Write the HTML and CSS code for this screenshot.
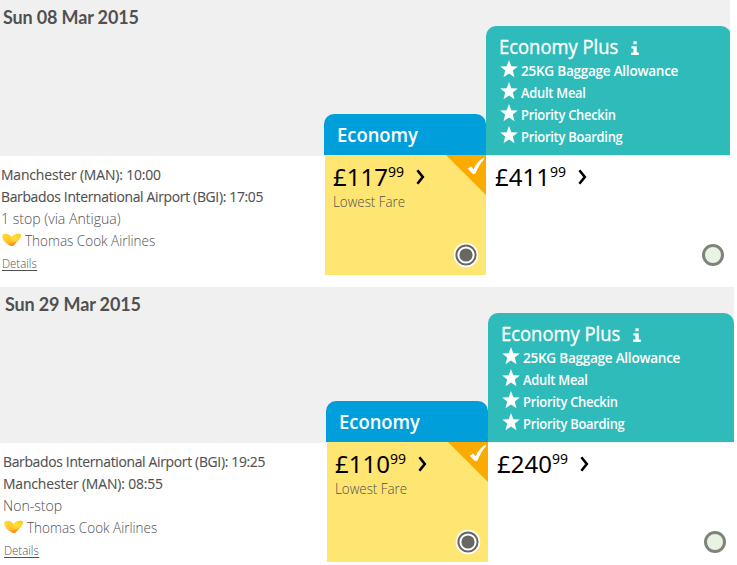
FILE: index.html
```html
<!DOCTYPE html>
<html lang="en">
<head>
<meta charset="utf-8">
<title>Flight selection</title>
<link rel="stylesheet" href="styles.css">
</head>
<body>
<svg class="symbols" aria-hidden="true">
  <defs>
    <linearGradient id="gold" x1="0" y1="0" x2=".75" y2="1"><stop offset="0" stop-color="#ffdc30"/><stop offset=".5" stop-color="#ffc928"/><stop offset="1" stop-color="#ff7508"/></linearGradient>
    <linearGradient id="wing" x1="1" y1="0" x2="0" y2="1"><stop offset="0" stop-color="#ffc814"/><stop offset=".5" stop-color="#ffdf3c"/><stop offset="1" stop-color="#ffb020"/></linearGradient>
    <symbol id="star" viewBox="0 0 18 18"><path d="M9 0l2.300 6.200 6.500.3-5 4.100 1.700 6.600L9 13.500l-5.500 3.700 1.700-6.600-5-4.100 6.500-.3z" fill="#fff"/></symbol>
    <symbol id="info" viewBox="0 0 8 14"><path d="M2.400.3h3.300v3H2.400zM.4 5.200h5.300v6.400h2.100V14H.1v-2.400h2.300V7.400h-2z" fill="#fff"/></symbol>
    <symbol id="arrow" viewBox="0 0 9 16"><path d="M1.400 1.200L6.800 8l-5.400 6.800" fill="none" stroke="#000" stroke-width="2.600"/></symbol>
    <symbol id="heart" viewBox="0 0 19 14"><path d="M.2 3.500C.2 1.300 2 .6 4 .8c2.400.1 4.400 1.400 5.500 3.400C11.500 1.800 14.500.4 17.300.8c1.700.4 1.800 2.200.9 3.700-1.500 2.700-3.700 4.800-5.600 6.900-1 1.200-2 1.900-3.400 1.600C5.300 11.800.8 7.800.2 3.500z" fill="url(#gold)"/><path d="M5.500 8.200C8 7.500 9 4.800 10.300 3.300 12.200 1.500 14.800.4 17.300.8c1.700.4 1.800 2.200.9 3.700C16.500 7.500 13 9.500 10 9.800c-2 .1-3.500-.6-4.500-1.600z" fill="url(#wing)"/></symbol>
    <symbol id="corner" viewBox="0 0 40 40"><path d="M0 0h40v40z" fill="#fbab00"/><path d="M21.600 13.700l3.500-2.200 2.500 2.700C30 9 33 5.200 37.800 2.500l.2 1.700c-3.900 4.300-6.200 8.700-8.500 14.300l-2.300.7z" fill="#fff"/></symbol>
    <symbol id="selected" viewBox="0 0 26 26"><circle cx="13" cy="13" r="12.300" fill="#fff"/><circle cx="13" cy="13" r="9.600" fill="none" stroke="#676863" stroke-width="2"/><circle cx="13" cy="13" r="6.600" fill="#676863"/></symbol>
    <symbol id="empty" viewBox="0 0 22 22"><circle cx="11" cy="11" r="9.500" fill="#e8f4e1" stroke="#7e837b" stroke-width="3"/></symbol>
  </defs>
</svg>
<section class="flight outbound">
  <header class="fare-header">
    <h2>Sun 08 Mar 2015</h2>
    <div class="tab economy"><h3>Economy</h3></div>
    <div class="tab plus">
      <div class="plus-title"><h3>Economy Plus</h3><svg class="info"><use href="#info"/></svg></div>
      <ul>
        <li><svg><use href="#star"/></svg><span class="baggage">25KG Baggage Allowance</span></li>
        <li><svg><use href="#star"/></svg><span>Adult Meal</span></li>
        <li><svg><use href="#star"/></svg><span>Priority Checkin</span></li>
        <li><svg><use href="#star"/></svg><span>Priority Boarding</span></li>
      </ul>
    </div>
  </header>
  <div class="fare-row">
    <div class="details">
      <p class="place short">Manchester (MAN): 10:00</p>
      <p class="place">Barbados International Airport (BGI): 17:05</p>
      <p class="stops">1 stop (via Antigua)</p>
      <p class="airline"><svg><use href="#heart"/></svg><span>Thomas Cook Airlines</span></p>
      <a>Details</a>
    </div>
    <div class="fare chosen">
      <p class="price"><span>£117</span><sup>99</sup><svg><use href="#arrow"/></svg></p>
      <p class="lowest">Lowest Fare</p>
      <svg class="corner"><use href="#corner"/></svg>
      <svg class="radio"><use href="#selected"/></svg>
    </div>
    <div class="fare open">
      <p class="price"><span>£411</span><sup>99</sup><svg><use href="#arrow"/></svg></p>
      <svg class="radio"><use href="#empty"/></svg>
    </div>
  </div>
</section>
<section class="flight inbound">
  <header class="fare-header">
    <h2>Sun 29 Mar 2015</h2>
    <div class="tab economy"><h3>Economy</h3></div>
    <div class="tab plus">
      <div class="plus-title"><h3>Economy Plus</h3><svg class="info"><use href="#info"/></svg></div>
      <ul>
        <li><svg><use href="#star"/></svg><span class="baggage">25KG Baggage Allowance</span></li>
        <li><svg><use href="#star"/></svg><span>Adult Meal</span></li>
        <li><svg><use href="#star"/></svg><span>Priority Checkin</span></li>
        <li><svg><use href="#star"/></svg><span>Priority Boarding</span></li>
      </ul>
    </div>
  </header>
  <div class="fare-row">
    <div class="details">
      <p class="place">Barbados International Airport (BGI): 19:25</p>
      <p class="place short">Manchester (MAN): 08:55</p>
      <p class="stops">Non-stop</p>
      <p class="airline"><svg><use href="#heart"/></svg><span>Thomas Cook Airlines</span></p>
      <a>Details</a>
    </div>
    <div class="fare chosen">
      <p class="price"><span>£110</span><sup>99</sup><svg><use href="#arrow"/></svg></p>
      <p class="lowest">Lowest Fare</p>
      <svg class="corner"><use href="#corner"/></svg>
      <svg class="radio"><use href="#selected"/></svg>
    </div>
    <div class="fare open">
      <p class="price"><span>£240</span><sup>99</sup><svg><use href="#arrow"/></svg></p>
      <svg class="radio"><use href="#empty"/></svg>
    </div>
  </div>
</section>
</body>
</html>
```
FILE: styles.css
```css
* { box-sizing: border-box; margin: 0; padding: 0; }
body { background: #fff; color: #505050; font-family: "Open Sans", "Noto Sans", sans-serif; font-size: 15px; overflow: hidden; }
.symbols { position: absolute; width: 0; height: 0; }
.flight { height: 275px; overflow: hidden; }
.outbound { width: 730px; margin-bottom: 12px; }
.inbound { width: 734px; }
.inbound .fare-header, .inbound .fare-row { padding-left: 2px; }

.fare-header { display: grid; grid-template-columns: 324px 162px 246px; height: 156px; padding-bottom: 1px; align-items: end; background: #f0f0f0; }
.fare-header h2 { align-self: start; padding: 5px 0 0 3px; font: 700 18px/24px Lato, sans-serif; letter-spacing: -.15px; white-space: nowrap; }
.tab { border-radius: 10px 10px 0 0; color: #fff; }
.tab h3 { font-size: 20px; transform: scaleX(.92); transform-origin: 0 50%; }
.economy { height: 41px; padding-left: 13px; background: #009fdc; }
.economy h3 { font-weight: 600; line-height: 42px; }
.plus { width: 246px; height: 129px; padding: 7px 0 0 13px; background: #2fbbb9; }
.outbound .plus { width: 245px; }
.plus-title { display: flex; align-items: center; height: 27px; }
.plus-title h3 { width: 132px; font-weight: 400; line-height: 26px; white-space: nowrap; -webkit-text-stroke: .35px #fff; }
.info { width: 8px; height: 14px; margin-top: 2px; }
.plus ul { list-style: none; }
.plus li { display: flex; height: 22px; font-size: 15px; font-weight: 600; line-height: 21px; white-space: nowrap; letter-spacing: -.3px; }
.plus li svg { width: 18px; height: 18px; margin: 0 3px 0 1px; }
.plus li span { transform: scaleX(.86); transform-origin: 0 50%; }
.plus li .baggage { transform: scaleX(.905); }

.fare-row { display: grid; grid-template-columns: 324px 162px 246px; height: 119px; }
.details { padding: 7px 0 0 1px; line-height: 22px; white-space: nowrap; }
.details p { height: 22px; }
.place { -webkit-text-stroke: .12px #505050; letter-spacing: -.35px; transform: scaleX(.927); transform-origin: 0 50%; }
.short { letter-spacing: -.15px; }
.stops { font-weight: 300; transform: scaleX(.94); transform-origin: 0 50%; }
.airline { display: flex; font-weight: 300; }
.airline span { transform: scaleX(.9); transform-origin: 0 50%; }
.airline svg { width: 19px; height: 14px; margin: 4px 4px 0 1px; }
.details a { display: block; width: max-content; height: 17px; margin: 3px 0 0 1px; border-bottom: 1px solid #505050; font-weight: 300; font-size: 13px; line-height: 18px; transform: scaleX(.88); transform-origin: 0 50%; }
.fare { position: relative; margin-top: -1px; }
.chosen { margin-left: 1px; padding-left: 8px; background: #ffe571; }
.open { padding-left: 9px; }
.price { display: flex; height: 35px; padding-top: 4px; color: #000; font: 400 24px/36px "Noto Sans", sans-serif; }
.price sup { margin-left: 0; font-size: 14px; line-height: 26px; }
.price svg { width: 9px; height: 16px; margin: 10px 0 0 12px; }
.lowest { font-weight: 300; line-height: 22px; transform: scaleX(.89); transform-origin: 0 50%; }
.corner { position: absolute; top: 0; right: 0; width: 40px; height: 40px; }
.radio { position: absolute; right: 7px; bottom: 7px; width: 26px; height: 26px; }
.open .radio { right: 8px; bottom: 9px; width: 22px; height: 22px; }
```
